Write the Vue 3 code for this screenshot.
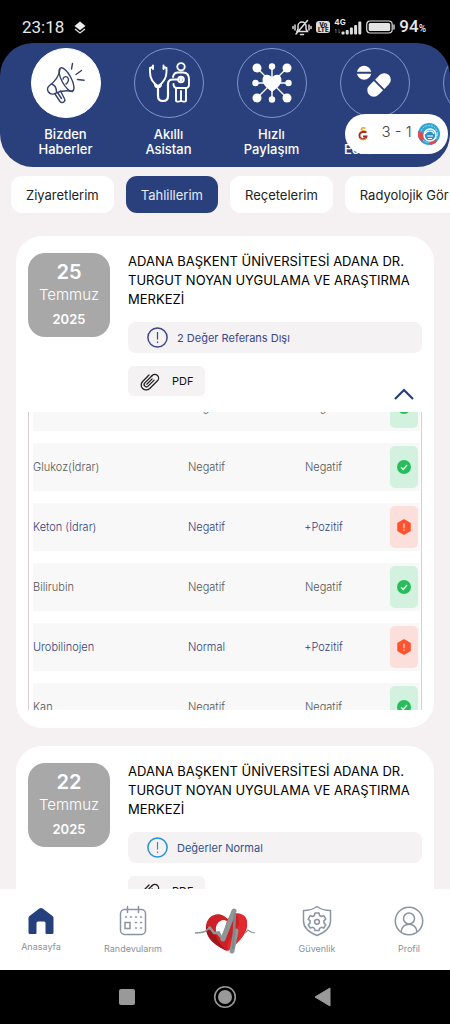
<script setup>
import { ref } from 'vue'

const shortcuts = [
  { id: 'news', lines: ['Bizden', 'Haberler'] },
  { id: 'assistant', lines: ['Akıllı', 'Asistan'] },
  { id: 'share', lines: ['Hızlı', 'Paylaşım'] },
  { id: 'pharmacy', lines: ['Nöbetçi', 'Eczaneler'] },
  { id: 'more', lines: [] },
]
const activeShortcut = ref('news')

const tabs = ['Ziyaretlerim', 'Tahlillerim', 'Reçetelerim', 'Radyolojik Gör']
const activeTab = ref('Tahlillerim')

const hospital = 'ADANA BAŞKENT ÜNİVERSİTESİ ADANA DR. TURGUT NOYAN UYGULAMA VE ARAŞTIRMA MERKEZİ'
const results = [
  { name: 'Nitrit', expected: 'Negatif', value: 'Negatif', ok: true },
  { name: 'Glukoz(İdrar)', expected: 'Negatif', value: 'Negatif', ok: true },
  { name: 'Keton (İdrar)', expected: 'Negatif', value: '+Pozitif', ok: false },
  { name: 'Bilirubin', expected: 'Negatif', value: 'Negatif', ok: true },
  { name: 'Urobilinojen', expected: 'Normal', value: '+Pozitif', ok: false },
  { name: 'Kan', expected: 'Negatif', value: 'Negatif', ok: true },
]
const reports = [
  { day: '25', month: 'Temmuz', year: '2025', status: '2 Değer Referans Dışı', normal: false, rows: results },
  { day: '22', month: 'Temmuz', year: '2025', status: 'Değerler Normal', normal: true, rows: [] },
]

const nav = [
  { id: 'home', label: 'Anasayfa' },
  { id: 'calendar', label: 'Randevularım' },
  { id: 'heart', label: '' },
  { id: 'shield', label: 'Güvenlik' },
  { id: 'profile', label: 'Profil' },
]
</script>

<template>
  <div class="phone">
    <div class="statusbar">
      <span class="clock">23:18</span>
      <svg class="layers" width="12" height="13" viewBox="0 0 12 13">
        <path d="M6 0.5 11.5 5 6 9.2 0.5 5Z" fill="#eee" />
        <path d="M1 8 6 12 11 8" fill="none" stroke="#ddd" stroke-width="1.3" />
      </svg>
      <div class="indicators">
        <svg width="20" height="17" viewBox="0 0 20 17" fill="none" stroke="#ddd" stroke-width="1.5" stroke-linecap="round">
          <path d="M5 12.5h10.5L14 10V7a4 4 0 0 0-8 0v3ZM8.5 15.500h3M4 15 15.5 1.5M3 6v5M1 7.5v2M17 6v5M19 7.5v2" />
        </svg>
        <span class="volte"><span>Vo</span><span>LTE</span></span>
        <span class="signal">
          <span class="gen">4G</span>
          <svg width="28" height="15" viewBox="0 0 28 15">
            <path d="M2 9v4M1 10.300 2 9M5 9v4M5 13l1-1.300" stroke="#777" stroke-width="0.8" fill="none" />
            <g fill="#ddd">
              <rect x="7.500" y="11.500" width="3" height="3" rx="1" />
              <rect x="11.700" y="10" width="3" height="4.500" rx="1" />
              <rect x="15.900" y="7.500" width="3" height="7" rx="1" />
              <rect x="20.100" y="5" width="3" height="9.500" rx="1" />
              <rect x="24.300" y="1.500" width="3" height="13" rx="1" />
            </g>
          </svg>
        </span>
        <svg width="29" height="14" viewBox="0 0 29 14">
          <rect x="0.700" y="1" width="25.500" height="12" rx="3.500" fill="none" stroke="#ddd" stroke-width="1.200" />
          <rect x="2.700" y="3" width="21.500" height="8" rx="1.500" fill="#e4e4e4" />
          <path d="M28 5v4" stroke="#ddd" stroke-width="1.400" stroke-linecap="round" />
        </svg>
        <span class="battery">94<small>%</small></span>
      </div>
    </div>

    <header class="hero">
      <nav class="shortcuts" aria-label="Kısayollar">
        <button
          v-for="item in shortcuts"
          :key="item.id"
          type="button"
          class="shortcut"
          :class="{ active: item.id === activeShortcut }"
          @click="activeShortcut = item.id"
        >
          <span class="disc">
            <svg v-if="item.id === 'news'" width="40" height="42" viewBox="0 0 40 42" fill="none" stroke="#35406f" stroke-width="1.400" stroke-linecap="round" stroke-linejoin="round">
              <path d="M14 7.500c-1 7-5 12-11 16.500-2 2-1.500 4.500-.5 6 1.300 2 3.500 2.500 5.500 1.800 6-3 11.500-4 18.500-2.300" />
              <ellipse cx="20.500" cy="17.500" rx="4.800" ry="13" transform="rotate(-28 20.500 17.500)" />
              <path d="M17 17c1-3 4-3 5-1s0 5-2 6M5.500 22c3 1 5 4 5 8M9 32l5 7.500c2 2.500 6 0 4.500-2.700L14.500 29M11.500 30.500l4 6" />
              <path d="M26.500 1.500 25.500 7M35.500 8.500 30 12.500M31.500 17.500l6.500.8" />
            </svg>
            <svg v-else-if="item.id === 'assistant'" width="42" height="42" viewBox="0 0 42 42" fill="none" stroke="#fff" stroke-width="1.900" stroke-linecap="round" stroke-linejoin="round">
              <path d="M5 5 2 6v4c0 7 3 11 8 14 5-3 8.500-7 8.500-14V6l-3-1M5 3.500v3.500M15.500 3.500v3.500" />
              <path d="M7 22.500c.5 3.500 5.500 3.500 6 0M10 25v9c0 3 1.800 5 5 5s5-2 5-5V22c0-3 2-4.500 5-4.500h5" stroke-width="2.200" />
              <circle cx="33" cy="4.800" r="3.700" />
              <path d="M25 15c.5-3 2-4.500 5-4.500h5c4 0 6 3 6 7v5c0 2-1.500 3.500-3.500 3.500H29c-2 0-3.500-1.500-3.500-4" />
              <circle cx="33" cy="17.500" r="2.800" />
              <path d="M28 26v12.500c0 1.500 4.500 1.500 5 0V29M33 38.500c.5 1.500 5 1.500 5 0V26" />
              <circle cx="33" cy="17.500" r="0.800" fill="#fff" />
            </svg>
            <svg v-else-if="item.id === 'share'" width="40" height="40" viewBox="0 0 40 40" fill="#fff">
              <path d="M5 5 35 35M35 5 5 35M20 4v32M4 20h32" stroke="#fff" stroke-width="1.400" />
              <circle v-for="p in [[5,5],[35,5],[5,35],[35,35]]" :key="p.join()" :cx="p[0]" :cy="p[1]" r="4.500" />
              <circle v-for="p in [[20,3.500],[20,36.500],[3.500,20],[36.500,20]]" :key="p.join()" :cx="p[0]" :cy="p[1]" r="3.200" />
              <path d="M20 29C15 25 10.500 21.500 10.500 17c0-5.500 6.500-7 9.500-2.500C23 10 29.500 11.500 29.500 17c0 4.500-4.500 8-9.500 12Z" />
            </svg>
            <svg v-else-if="item.id === 'pharmacy'" width="40" height="40" viewBox="0 0 40 40" fill="#fff">
              <path d="M2 8.700a7.200 7.200 0 0 1 14.200 0ZM2 10.800a7.200 7.200 0 0 0 14.200 0Z" />
              <g transform="rotate(-45 24 22)">
                <path d="M23.200 15.500v13h-6.500a6.500 6.500 0 0 1 0-13Z" />
                <path d="M25 15.500v13h6.500a6.500 6.500 0 0 0 0-13Z" />
              </g>
            </svg>
          </span>
          <span class="caption"><span v-for="line in item.lines" :key="line">{{ line }}</span></span>
        </button>
      </nav>
      <div class="score">
        <svg width="12" height="14" viewBox="0 0 12 14" fill="none">
          <path d="M8.500 1.500C6.500 0 4 1 4.500 2.500s3 1 4 2" stroke="#e9a13a" stroke-width="1.500" />
          <path d="M9.500 5H5.500A3.600 3.600 0 1 0 9.500 9.500H6" stroke="#a33028" stroke-width="1.800" />
          <path d="M2.500 11c1.500 2.500 5.500 2.500 7 0" stroke="#e9a13a" stroke-width="1.200" />
        </svg>
        <span class="goals">3 - 1</span>
        <svg width="22" height="22" viewBox="0 0 22 22" fill="none">
          <circle cx="11" cy="11" r="11" fill="#2fa6d4" />
          <circle cx="11" cy="11" r="8.500" stroke="#a9dcef" stroke-width="1" stroke-dasharray="2 1" />
          <path d="M0 8 8 11 4 19A11 11 0 0 1 0 8ZM11 18l7-2 .5 3A11 11 0 0 1 12 22Z" fill="#d94a57" />
          <circle cx="12" cy="12" r="6" fill="#2b91c5" stroke="#fff" stroke-width="1.500" />
          <path d="M7 11c2-4 8-4 9 0M9 13h6M10 15.500h4" stroke="#fff" stroke-width="1.200" />
        </svg>
      </div>
    </header>

    <main class="content">
      <div class="tabs">
        <button
          v-for="tab in tabs"
          :key="tab"
          type="button"
          class="tab"
          :class="{ selected: tab === activeTab }"
          @click="activeTab = tab"
        >{{ tab }}</button>
      </div>

      <article v-for="report in reports" :key="report.day" class="card">
        <div class="summary">
          <time class="date">
            <span class="day">{{ report.day }}</span>
            <span class="month">{{ report.month }}</span>
            <span class="year">{{ report.year }}</span>
          </time>
          <div class="details">
            <h2>{{ hospital }}</h2>
            <p class="state" :class="{ normal: report.normal }">
              <svg width="21" height="21" viewBox="0 0 21 21" fill="none" stroke="currentColor" stroke-width="1.500">
                <circle cx="10.500" cy="10.500" r="9.600" />
                <path d="M10.500 5v7.500M10.500 14.500v1.500" stroke-width="1.200" />
              </svg>
              <span>{{ report.status }}</span>
            </p>
            <div class="actions">
              <button type="button" class="pdf">
                <svg width="20" height="20" viewBox="0 0 20 20" fill="none" stroke="#222" stroke-width="1.300" stroke-linecap="round">
                  <g transform="rotate(45 10 10)">
                    <path d="M12.300 6.500V15a2.300 2.300 0 0 1-4.600 0V4.500" />
                    <path d="M7.700 5V4.500a3.700 3.700 0 0 1 7.400 0V15.500a5 5 0 0 1-10 0V6.500" />
                    <path d="M10 7v7.500" />
                  </g>
                </svg>
                <span>PDF</span>
              </button>
              <button v-if="report.rows.length" type="button" class="toggle" aria-label="Daralt">
                <svg width="20" height="12" viewBox="0 0 20 12" fill="none" stroke="#293f7c" stroke-width="2.200">
                  <path d="M1 11 10 2l9 9" />
                </svg>
              </button>
            </div>
          </div>
        </div>
        <div v-if="report.rows.length" class="results">
          <table>
            <colgroup><col /><col class="c-ref" /><col class="c-val" /><col class="c-mark" /></colgroup>
            <tbody>
              <tr v-for="row in report.rows" :key="row.name" :class="{ alert: !row.ok }">
                <td>{{ row.name }}</td>
                <td class="mid">{{ row.expected }}</td>
                <td class="mid val">{{ row.value }}</td>
                <td class="mark">
                  <span class="badge">
                    <svg v-if="row.ok" width="14" height="14" viewBox="0 0 14 14">
                      <circle cx="7" cy="7" r="7" fill="#27bd5b" />
                      <path d="M4 7.300 6.200 9.500 10 5" fill="none" stroke="#e5ffed" stroke-width="1.300" />
                    </svg>
                    <svg v-else width="16" height="16" viewBox="0 0 16 16">
                      <path d="M8 1 14 4.300v7.400L8 15 2 11.700V4.300Z" fill="#ff5330" stroke="#ff5330" stroke-width="1.500" stroke-linejoin="round" />
                      <path d="M8 4.500v4.700M8 10.500v1.300" stroke="#ffe0d8" stroke-width="1.200" />
                    </svg>
                  </span>
                </td>
              </tr>
            </tbody>
          </table>
        </div>
      </article>
    </main>

    <nav class="bottom" aria-label="Ana menü">
      <a v-for="item in nav" :key="item.id" href="#" :class="item.id" :aria-label="item.label || 'Sağlık'">
        <svg v-if="item.id === 'home'" width="28" height="30" viewBox="0 -2 28 30">
          <path d="M14 1q1 0 2 .8L25.500 9q1 .8 1 2v14.500q0 1.500-1.500 1.500h-5.500q-1 0-1-1V16q0-1.500-1.500-1.500h-6q-1.500 0-1.500 1.500v10q0 1-1 1H3q-1.500 0-1.500-1.500V11q0-1.200 1-2L12 1.800q1-.8 2-.8Z" fill="#263f7d" />
        </svg>
        <svg v-else-if="item.id === 'calendar'" width="30" height="32" viewBox="0 0 30 32" fill="none" stroke="#8a94a3" stroke-width="1.500" stroke-linecap="round">
          <rect x="2.500" y="4.500" width="25" height="25" rx="4" />
          <path d="M9.500 1.500v6M20.500 1.500v6" />
          <path d="M7.500 12h1M12.500 12h1M17.500 12h1M22.500 12h1M17.500 17.500h1M22.500 17.500h1M17.500 23h1M22.500 23h1" />
          <path d="M7 17.500h5v6H7Z" />
        </svg>
        <svg v-else-if="item.id === 'heart'" width="60" height="52" viewBox="0 0 60 52" fill="none">
          <path d="M32 46C22 41 11 35 11 22 11 12 21 6 29 11L33 14c4-7 13-8 17-1 7 10-4 24-18 33Z" fill="#ce2027" />
          <path d="M11 20c3 6 9 5 10 11 2 6 6 11 11 15C20 40 10 33 11 20Z" fill="#a3161d" />
          <path d="M33 46c-3-6 3-14 8-21 4-6 3-11 1-15 6-3 11 3 10 9-1 10-9 19-19 27Z" fill="#e02a2e" />
          <path d="M21 22c1-4 4-7 8-7l3 1-5 17c-4-2-7-6-6-11Z" fill="#fff" />
          <path d="M0 28c8 0 10-1 12-3l3-3 4 6 5-1 4 8" stroke="#8e9797" stroke-width="1.600" />
          <path d="M13 23l3 1 3 4h4l5 7" stroke="#8e9797" stroke-width="2.400" />
          <path d="M28 34 39 6M37 46 41 26" stroke="#8e9797" stroke-width="5" stroke-linecap="round" />
          <path d="M38 44 40 8" stroke="#7d8a8c" stroke-width="2.500" />
          <path d="M50 28 53 25l3 2 4 1" stroke="#8e9797" stroke-width="1.200" />
        </svg>
        <svg v-else-if="item.id === 'shield'" width="30" height="32" viewBox="0 0 30 32" fill="none" stroke="#8a94a3" stroke-width="1.500" stroke-linejoin="round">
          <path d="M15 1.500c4 3 8 4 13.500 4V16c0 6.500-6 11.500-13.500 14.500C7.500 27.500 1.500 22.500 1.500 16V5.500C7 5.500 11 4.500 15 1.500Z" />
          <path d="M13 8h4l.6 2.500 1.700 1 2.500-.8 2 3.400-1.900 1.800v2l1.900 1.800-2 3.400-2.500-.8-1.700 1L17 25.500h-4l-.6-2.200-1.700-1-2.500.8-2-3.400 1.900-1.800v-2l-1.900-1.800 2-3.400 2.500.8 1.700-1Z" />
          <circle cx="15" cy="16.800" r="2.400" />
        </svg>
        <svg v-else width="30" height="32" viewBox="0 0 30 32" fill="none" stroke="#8a94a3" stroke-width="1.500">
          <circle cx="15" cy="16" r="13.700" />
          <circle cx="15" cy="13.500" r="5.500" />
          <path d="M7 27c.5-10.500 15.500-10.500 16 0" />
        </svg>
        <span v-if="item.label">{{ item.label }}</span>
      </a>
    </nav>

    <div class="system">
      <button type="button" aria-label="Son uygulamalar">
        <svg width="24" height="24" viewBox="0 0 24 24"><rect x="4" y="4" width="16" height="16" rx="2" fill="#999" /></svg>
      </button>
      <button type="button" aria-label="Ana ekran">
        <svg width="24" height="24" viewBox="0 0 24 24"><circle cx="12" cy="12" r="10.300" fill="none" stroke="#999" stroke-width="1.600" /><circle cx="12" cy="12" r="7" fill="#999" /></svg>
      </button>
      <button type="button" aria-label="Geri">
        <svg width="24" height="24" viewBox="0 0 24 24"><path d="M19 3v18L4 12Z" fill="#999" stroke="#999" stroke-linejoin="round" /></svg>
      </button>
    </div>
  </div>
</template>

<style>
body { background: #f5f1f3; }
</style>

<style scoped>
.phone {
  display: flex;
  flex-direction: column;
  height: 100vh;
  overflow: hidden;
  background: #f5f1f3;
  color: #111;
  font-family: Inter, "Noto Sans", sans-serif;
  font-size: 13px;
}
button { border: 0; padding: 0; margin: 0; background: none; color: inherit; font: inherit; cursor: pointer; }
svg { display: block; flex: none; }

.statusbar {
  flex: none;
  display: flex;
  align-items: center;
  gap: 10px;
  box-sizing: border-box;
  height: 80px;
  margin-bottom: -37px;
  padding: 10px 24px 36px 22px;
  background: #000;
  color: #e8e8e8;
}
.clock { font: 400 17px/20px Roboto, sans-serif; }
.indicators { display: flex; align-items: center; gap: 4px; margin-left: auto; }
.volte {
  display: flex;
  flex-direction: column;
  align-items: center;
  width: 14px;
  padding: 1px 0;
  border-radius: 3px;
  background: #ddd;
  color: #111;
  font-size: 6px;
  font-weight: 800;
  line-height: 5px;
}
.signal { position: relative; }
.gen { position: absolute; top: -3px; left: 0; font-size: 8px; font-weight: 700; line-height: 10px; }
.battery { font: 500 17px/20px Roboto, sans-serif; }
.battery small { font-size: 10px; }

.hero {
  flex: none;
  position: relative;
  z-index: 1;
  border-radius: 33px;
  background: #2a407c;
  color: #fff;
}
.shortcuts { display: flex; overflow: hidden; border-radius: 33px; padding: 5px 0 10px 14px; }
.shortcut { flex: 0 0 103px; display: flex; flex-direction: column; align-items: center; gap: 9px; }
.disc {
  display: grid;
  place-items: center;
  box-sizing: border-box;
  width: 70px;
  height: 70px;
  border: 1px solid #7f95cc;
  border-radius: 50%;
}
.active .disc { background: #fff; border-color: #fff; }
.caption { display: grid; font-size: 13px; font-weight: 500; line-height: 15px; }
.score {
  position: absolute;
  top: 71px;
  right: 2px;
  display: flex;
  align-items: center;
  justify-content: space-between;
  box-sizing: border-box;
  width: 103px;
  height: 40px;
  padding: 0 8px 0 12px;
  border-radius: 20px;
  background: #fff;
  color: #444;
}
.goals { padding: 0 0 4px 6px; font: 300 15px/20px Inter, sans-serif; }

.content { flex: 1; min-height: 0; overflow: hidden; }
.tabs { display: flex; gap: 12px; padding: 9px 0 0 11px; overflow: hidden; }
.tab {
  flex: none;
  height: 37px;
  padding: 0 15px;
  border-radius: 11px;
  background: #fff;
  color: #222;
  font-size: 13px;
  white-space: nowrap;
}
.tab:last-child { flex: 1 0 auto; text-align: left; border-radius: 11px 0 0 11px; padding-right: 0; }
.tab.selected { background: #2a407c; color: #e6ebf8; }

.card { margin: 23px 16px 18px; padding: 16px 12px 18px; border-radius: 26px; background: #fff; }
.card + .card { margin-top: 18px; }
.summary { display: flex; align-items: flex-start; gap: 18px; }
.date {
  flex: none;
  display: flex;
  flex-direction: column;
  align-items: center;
  box-sizing: border-box;
  width: 82px;
  height: 84px;
  margin-top: 1px;
  padding-top: 8px;
  border-radius: 17px;
  background: #a8a8a8;
  color: #fff;
}
.day { font-size: 20px; font-weight: 600; line-height: 22px; }
.month { font-size: 15px; font-weight: 300; line-height: 24px; }
.year { font-size: 13px; font-weight: 600; line-height: 24px; }
.details { flex: 1; min-width: 0; }
h2 { margin: 0; font-size: 13px; font-weight: 400; line-height: 19px; color: #000; }
.state {
  display: flex;
  align-items: center;
  gap: 9px;
  height: 31px;
  margin: 13px 0;
  padding: 0 19px;
  border-radius: 8px;
  background: #f5f2f4;
  color: #3a478c;
  font-size: 11px;
  font-weight: 400;
}
.state.normal { color: #2791ce; }
.state.normal span { color: #2f5288; }
.actions { display: flex; align-items: flex-start; justify-content: space-between; min-height: 38px; }
.pdf {
  display: flex;
  align-items: center;
  gap: 12px;
  height: 30px;
  padding: 0 12px;
  border-radius: 6px;
  background: #f5f2f4;
  font-size: 11px;
  font-weight: 400;
}
.toggle { align-self: flex-end; padding: 4px 8px; }
.results {
  height: 298px;
  margin-top: 8px;
  padding: 0 1px 0 4px;
  overflow: hidden;
  border: solid #d8ced2;
  border-width: 0 1px;
}
table { width: 100%; margin-top: -41px; table-layout: fixed; border-collapse: separate; border-spacing: 0 12px; }
.c-ref { width: 117px; }
.c-val { width: 125px; }
.c-mark { width: 30px; }
td { height: 48px; padding: 0; background: #f8f8f8; color: #555; font-size: 11px; font-weight: 300; }
.alert td { color: #35407c; }
.mid { text-align: center; }
.val { padding-right: 8px; }
.badge { display: grid; place-items: center; width: 28px; height: 42px; border-radius: 5px; background: #d2f1df; }
.alert .badge { background: #fcdeda; }

.bottom {
  flex: none;
  display: grid;
  grid-template-columns: repeat(5, 1fr);
  gap: 10px;
  height: 81px;
  background: #fff;
}
.bottom a {
  display: flex;
  flex-direction: column;
  align-items: center;
  gap: 6px;
  padding-top: 16px;
  color: #8c919b;
  font-size: 9px;
  line-height: 12px;
  text-decoration: none;
}
.system { flex: none; display: flex; justify-content: center; gap: 74px; height: 54px; background: #000; }
</style>
